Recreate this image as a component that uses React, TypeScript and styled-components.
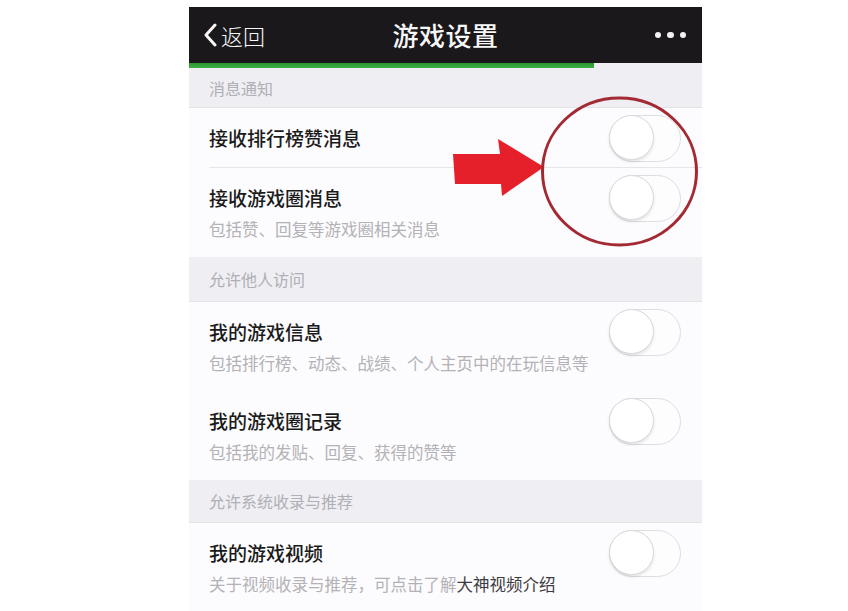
import React from "react";
import styled, { createGlobalStyle } from "styled-components";

const GlobalStyle = createGlobalStyle`
  html, body {
    margin: 0;
    padding: 0;
    background: #ffffff;
    font-family: "Noto Sans CJK SC", "Noto Sans", sans-serif;
  }
`;

const Page = styled.div`
  width: 848px;
  height: 611px;
  overflow: hidden;
  padding: 7px 0 0 189px;
  box-sizing: border-box;
`;

const Phone = styled.div`
  position: relative;
  width: 513px;
  height: 604px;
  overflow: hidden;
  background: #fcfbfd;
  display: flex;
  flex-direction: column;
`;

const NavBar = styled.div`
  height: 56px;
  flex-shrink: 0;
  background: #1b181c;
  display: grid;
  grid-template-columns: 1fr auto 1fr;
  align-items: center;
  color: #f7f7f7;
`;

const Back = styled.div`
  display: flex;
  align-items: center;
  gap: 4px;
  padding-left: 14px;
  font-size: 22px;
  font-weight: 300;
  line-height: 1;
`;

const NavTitle = styled.div`
  font-size: 26px;
  font-weight: 500;
  letter-spacing: 0.5px;
  line-height: 1;
`;

const More = styled.div`
  justify-self: end;
  display: flex;
  gap: 6px;
  padding-right: 16px;
`;

const Dot = styled.span`
  width: 6.5px;
  height: 6.5px;
  border-radius: 50%;
  background: #f2f2f2;
`;

const Progress = styled.div`
  height: 5px;
  flex-shrink: 0;
  background: #efeef3;
`;

const ProgressFill = styled.div`
  height: 100%;
  background: linear-gradient(#2a9630, #3cb043);
`;

const SectionHeader = styled.div<{ $h: number }>`
  height: ${({ $h }) => $h}px;
  flex-shrink: 0;
  box-sizing: border-box;
  background: #efeef3;
  border-bottom: 1px solid #e3e2e7;
  display: flex;
  align-items: center;
  padding-left: 20px;
  font-size: 16px;
  color: #b0afb5;
`;

const Row = styled.div<{ $h: number; $line?: boolean }>`
  height: ${({ $h }) => $h}px;
  flex-shrink: 0;
  box-sizing: border-box;
  display: flex;
  align-items: flex-start;
  justify-content: space-between;
  padding: 7px 21px 0 20px;
  position: relative;
  background: #fcfbfd;
  &::after {
    content: "";
    display: ${({ $line }) => ($line ? "block" : "none")};
    position: absolute;
    left: 20px;
    right: 0;
    bottom: 0;
    height: 1px;
    background: #e6e5ea;
  }
`;

const RowText = styled.div`
  padding-top: 12px;
  display: flex;
  flex-direction: column;
  gap: 9px;
`;

const Title = styled.div`
  font-size: 19px;
  font-weight: 500;
  line-height: 22px;
  color: #1a1a1a;
`;

const Sub = styled.div`
  font-size: 16.5px;
  line-height: 22px;
  color: #b3b2b6;
  white-space: nowrap;
`;

const Link = styled.span`
  color: #3c3c40;
`;

const Track = styled.div`
  width: 72px;
  height: 47px;
  box-sizing: border-box;
  border: 1.5px solid #dedde2;
  border-radius: 24px;
  background: #fdfdfe;
  position: relative;
  flex-shrink: 0;
`;

const Knob = styled.div`
  position: absolute;
  left: -1px;
  top: -1px;
  width: 45px;
  height: 45px;
  box-sizing: border-box;
  border-radius: 50%;
  background: #ffffff;
  border: 1.5px solid #d9d9dc;
  box-shadow: 0 2px 3px rgba(0, 0, 0, 0.1);
`;

const Annotation = styled.svg`
  position: absolute;
  left: 260px;
  top: 88px;
  pointer-events: none;
`;

const Toggle = () => (
  <Track>
    <Knob />
  </Track>
);

type Item = {
  title: string;
  sub?: React.ReactNode;
  line?: boolean;
};

const SettingRow = ({ title, sub, line }: Item) => (
  <Row $h={sub ? 89 : 60} $line={line}>
    <RowText>
      <Title>{title}</Title>
      {sub && <Sub>{sub}</Sub>}
    </RowText>
    <Toggle />
  </Row>
);

export default function App() {
  return (
    <>
      <GlobalStyle />
      <Page>
        <Phone>
          <NavBar>
            <Back>
              <svg width="14" height="24" viewBox="0 0 14 24">
                <path d="M12 2 L3 12 L12 22" fill="none" stroke="#f7f7f7" strokeWidth="3" strokeLinecap="round" strokeLinejoin="round" />
              </svg>
              <span>返回</span>
            </Back>
            <NavTitle>游戏设置</NavTitle>
            <More>
              <Dot />
              <Dot />
              <Dot />
            </More>
          </NavBar>
          <Progress>
            <ProgressFill style={{ width: "79%" }} />
          </Progress>
          <SectionHeader $h={40}>消息通知</SectionHeader>
          <SettingRow title="接收排行榜赞消息" line />
          <SettingRow title="接收游戏圈消息" sub="包括赞、回复等游戏圈相关消息" />
          <SectionHeader $h={45}>允许他人访问</SectionHeader>
          <SettingRow title="我的游戏信息" sub="包括排行榜、动态、战绩、个人主页中的在玩信息等" />
          <SettingRow title="我的游戏圈记录" sub="包括我的发贴、回复、获得的赞等" />
          <SectionHeader $h={43}>允许系统收录与推荐</SectionHeader>
          <SettingRow
            title="我的游戏视频"
            sub={
              <>
                关于视频收录与推荐，可点击了解<Link>大神视频介绍</Link>
              </>
            }
          />
          <Annotation width="260" height="160" viewBox="0 0 260 160">
            <path d="M4 59 L51 59 L49 44 L95 72 L53 101 L52 89 L6 89 Z" fill="#e6202a" />
            <ellipse cx="170.5" cy="76.5" rx="77" ry="73.5" fill="none" stroke="#a32a33" strokeWidth="3" />
          </Annotation>
        </Phone>
      </Page>
    </>
  );
}
